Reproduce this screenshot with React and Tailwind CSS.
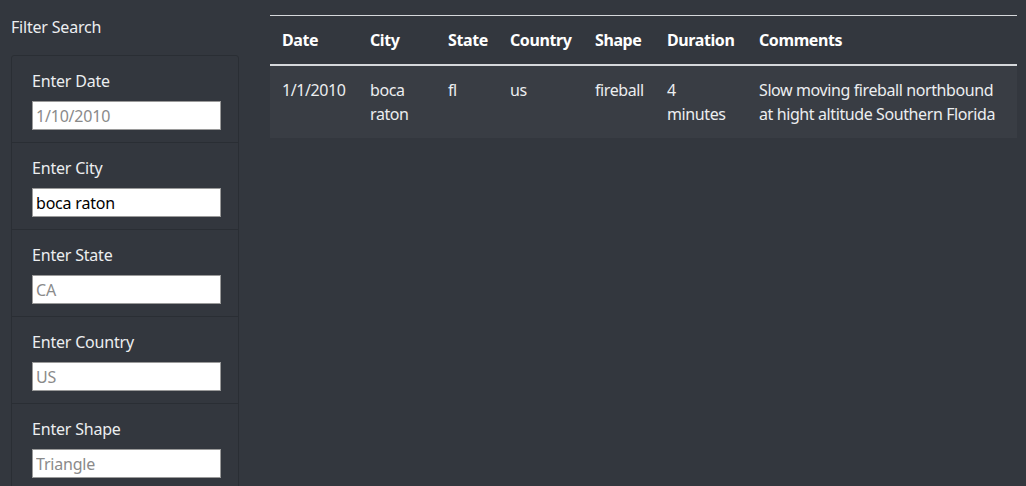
import React from 'react';

const filters = [
  { label: 'Enter Date', placeholder: '1/10/2010', value: '' },
  { label: 'Enter City', placeholder: '', value: 'boca raton' },
  { label: 'Enter State', placeholder: 'CA', value: '' },
  { label: 'Enter Country', placeholder: 'US', value: '' },
  { label: 'Enter Shape', placeholder: 'Triangle', value: '' },
];

const columns = [
  { name: 'Date', w: 'w-[88px]' },
  { name: 'City', w: 'w-[78px]' },
  { name: 'State', w: 'w-[62px]' },
  { name: 'Country', w: 'w-[85px]' },
  { name: 'Shape', w: 'w-[72px]' },
  { name: 'Duration', w: 'w-[92px]' },
  { name: 'Comments', w: 'w-[270px]' },
];

const rows = [
  ['1/1/2010', 'boca raton', 'fl', 'us', 'fireball', '4 minutes', 'Slow moving fireball northbound at hight altitude Southern Florida'],
];

export default function App() {
  return (
    <div className="bg-[#33373e] text-[#eceef0] font-['Noto_Sans',sans-serif] text-[16px] flex overflow-hidden h-[486px]">
      {/* Sidebar filters */}
      <aside className="w-[270px] shrink-0 pl-[11px] pr-[31px] pt-[15px]">
        <h4 className="leading-[24px] mb-[16px] tracking-[-0.2px]">Filter Search</h4>
        <ul className="border border-[#2a2e34] rounded-[3px]">
          {filters.map((f) => (
            <li key={f.label} className="border-b border-[#2a2e34] h-[87px] px-[20px] pt-[13px]">
              <label className="block leading-[24px] tracking-[-0.2px] mb-[8px]">{f.label}</label>
              <input
                type="text"
                defaultValue={f.value}
                placeholder={f.placeholder}
                className="w-[189px] h-[29px] bg-white border border-[#9a9a9a] px-[3px] text-black placeholder:text-[#8a8a8a] text-[16px] tracking-[-0.2px] outline-none"
              />
            </li>
          ))}
        </ul>
      </aside>

      {/* Results table */}
      <main className="flex-1 pt-[15px] pr-[9px]">
        <table className="w-[747px] table-fixed border-collapse text-left">
          <thead>
            <tr className="border-t border-[#d6d8db] border-b-2 border-b-[#d6d8db]">
              {columns.map((c) => (
                <th key={c.name} className={`${c.w} px-[12px] py-[12px] font-bold text-white leading-[24px] align-bottom tracking-[-0.4px]`}>
                  {c.name}
                </th>
              ))}
            </tr>
          </thead>
          <tbody>
            {rows.map((r, i) => (
              <tr key={i} className="bg-[#393d44]">
                {r.map((cell, j) => (
                  <td key={j} className="px-[12px] py-[12px] align-top leading-[24px] tracking-[-0.4px]">
                    {cell}
                  </td>
                ))}
              </tr>
            ))}
          </tbody>
        </table>
      </main>
    </div>
  );
}
